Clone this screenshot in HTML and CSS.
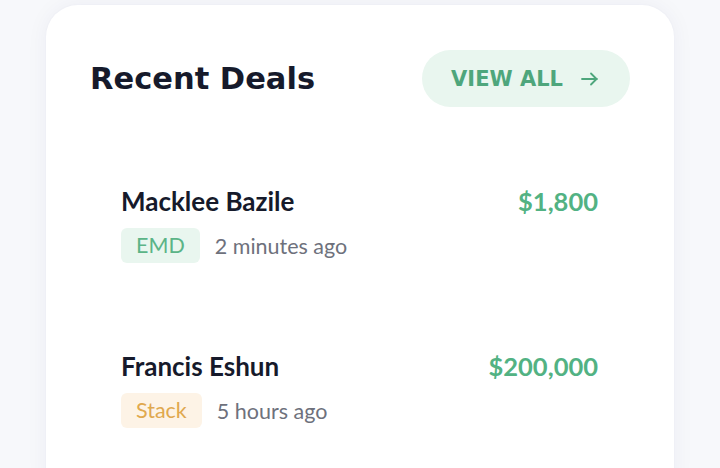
FILE: index.html
```html
<!DOCTYPE html>
<html>
<head>
<meta charset="utf-8">
<link rel="stylesheet" href="styles.css">
</head>
<body>
<div class="card">
  <div class="header">
    <h2 class="title">Recent Deals</h2>
    <a class="view-all" href="#">VIEW ALL
      <svg class="arrow" width="17" height="14" viewBox="0 0 17 14" fill="none" stroke="currentColor" stroke-width="1.8" stroke-linecap="round" stroke-linejoin="round"><path d="M1 7h15M10 1.5L15.5 7L10 12.5"/></svg>
    </a>
  </div>
  <ul class="deals">
    <li class="deal">
      <div class="deal-top">
        <span class="name">Macklee Bazile</span>
        <span class="amount">$1,800</span>
      </div>
      <div class="deal-meta">
        <span class="badge badge-green">EMD</span>
        <span class="time">2 minutes ago</span>
      </div>
    </li>
    <li class="deal">
      <div class="deal-top">
        <span class="name">Francis Eshun</span>
        <span class="amount">$200,000</span>
      </div>
      <div class="deal-meta">
        <span class="badge badge-orange">Stack</span>
        <span class="time">5 hours ago</span>
      </div>
    </li>
  </ul>
</div>
</body>
</html>
```
FILE: styles.css
```css
html, body {
  margin: 0;
  padding: 0;
}
body {
  background: #f7f8fb;
  font-family: Lato, "Open Sans", sans-serif;
  height: 468px;
  overflow: hidden;
}
.card {
  margin: 5px 0 0 46px;
  width: 628px;
  height: 500px;
  box-sizing: border-box;
  background: #ffffff;
  border-radius: 32px;
  box-shadow: 0 0 22px rgba(30, 40, 90, 0.05), 0 0 2px rgba(30, 40, 90, 0.04);
  padding: 45px 44px 0 44px;
}
.header {
  display: flex;
  align-items: center;
  justify-content: space-between;
}
.title {
  margin: 0;
  font-family: "DejaVu Sans", sans-serif;
  font-weight: bold;
  font-size: 30.5px;
  line-height: 40px;
  color: #161a2b;
}
.view-all {
  display: flex;
  align-items: center;
  gap: 18px;
  height: 57px;
  box-sizing: border-box;
  padding: 0 32px 0 29px;
  border-radius: 29px;
  background: #e9f6ef;
  color: #4ea67c;
  font-family: "DejaVu Sans", sans-serif;
  font-weight: bold;
  font-size: 21px;
  text-decoration: none;
}
.arrow {
  display: block;
}
.deals {
  list-style: none;
  margin: 0;
  padding: 79px 32px 0 31px;
  display: flex;
  flex-direction: column;
  gap: 88px;
}
.deal-top {
  display: flex;
  justify-content: space-between;
  align-items: baseline;
  height: 30px;
  line-height: 30px;
}
.name {
  font-weight: bold;
  font-size: 26px;
  color: #161a2b;
}
.amount {
  font-weight: bold;
  font-size: 25.5px;
  color: #52b283;
}
.deal-meta {
  display: flex;
  align-items: center;
  gap: 15px;
  margin-top: 12px;
}
.badge {
  display: inline-block;
  padding: 0 15px;
  height: 35px;
  line-height: 35px;
  font-size: 21.5px;
  border-radius: 6px;
}
.badge-green {
  background: #e9f6ef;
  color: #5bb487;
}
.badge-orange {
  background: #fdf3e6;
  color: #e0a84e;
}
.time {
  font-size: 21.5px;
  color: #6e717c;
}
```
